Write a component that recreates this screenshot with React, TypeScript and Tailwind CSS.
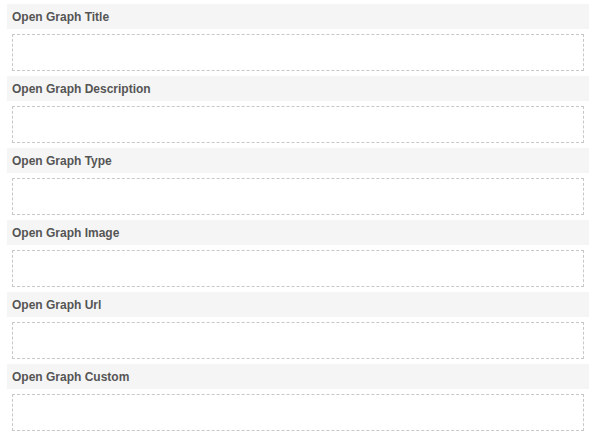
import React from "react";

const labels = [
  "Open Graph Title",
  "Open Graph Description",
  "Open Graph Type",
  "Open Graph Image",
  "Open Graph Url",
  "Open Graph Custom",
];

export default function App() {
  return (
    <div className="w-[595px] h-[445px] bg-white pt-[4px] px-[6px] font-['Liberation_Sans',Arial,sans-serif]">
      <div className="w-[582px] ml-[1px] flex flex-col">
        {labels.map((l) => (
          <div key={l} className="flex flex-col">
            <div className="h-[25px] bg-[#f5f5f5] pl-[5px] flex items-center text-[12px] font-bold text-[#555]">
              {l}
            </div>
            <div className="mx-[5px] mt-[5px] mb-[5px] h-[37px] border border-dashed border-[#c8c8c8] bg-white" />
          </div>
        ))}
      </div>
    </div>
  );
}
